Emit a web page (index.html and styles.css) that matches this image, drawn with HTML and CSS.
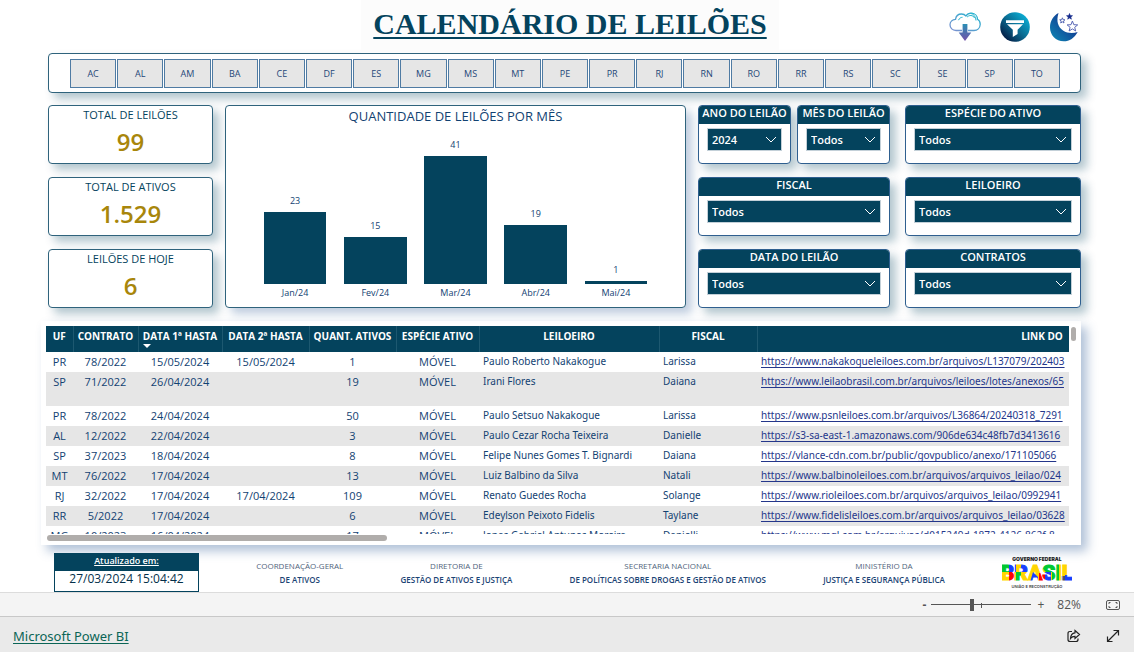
FILE: index.html
```html
<!DOCTYPE html>
<html lang="pt-BR">
<head>
<meta charset="utf-8">
<meta name="viewport" content="width=device-width, initial-scale=1">
<title>Calendário de Leilões</title>
<link rel="stylesheet" href="styles.css">
</head>
<body>
<main class="report">
  <header class="report-header">
    <h1 class="report-title">CALENDÁRIO DE LEILÕES</h1>
    <div class="actions">
      <button class="icon-button" aria-label="Baixar">
        <svg width="32" height="30" viewBox="0 0 32 30">
          <defs>
            <linearGradient id="cloud" x1="0" y1="1" x2="1" y2="0"><stop offset="0" stop-color="#7c8fd0"/><stop offset="1" stop-color="#1fb6cf"/></linearGradient>
            <linearGradient id="arrow" x1="0" y1="0" x2="0" y2="1"><stop offset="0" stop-color="#2b8fb5"/><stop offset="1" stop-color="#7450a8"/></linearGradient>
          </defs>
          <path d="M13 18.500H7C3.500 18.500 1 16 1 12.800C1 9.600 3.500 7.500 6.500 7.300C7 4 9.500 2 12.500 2C14.500 2 16 2.800 17 4C18.200 2 20.500 1 22.800 1.200C26 1.500 28.500 4 28.500 7.300C30.300 8.300 31.300 10.200 31.200 12.500C31 16 28.500 18.500 25 18.500H19" fill="none" stroke="url(#cloud)" stroke-width="1.300"/>
          <path d="M18 5.200C20 2.800 24 2.800 25.600 6M21.500 1.300C24.500 2 27 4.500 27 8.500M9.500 8.200C10.200 6.300 11.800 5.300 13.500 5.300" fill="none" stroke="#27b5cf" stroke-width="1"/>
          <path d="M13.600 12H18.400V20.500H22.300L16 29L9.700 20.500H13.600Z" fill="url(#arrow)"/>
        </svg>
      </button>
      <button class="icon-button" aria-label="Filtros">
        <svg width="30" height="30" viewBox="0 0 30 30">
          <defs><linearGradient id="disc" x1="0" y1="1" x2="1" y2="0"><stop offset="0.100" stop-color="#04173f"/><stop offset="0.500" stop-color="#0a6c92"/><stop offset="1" stop-color="#0cc3ea"/></linearGradient></defs>
          <circle cx="15" cy="15" r="14.800" fill="url(#disc)"/>
          <path d="M6 8.200H24V11H6ZM7 12.200H23L17.600 17.800V22L12.800 25V17.800Z" fill="#fff"/>
        </svg>
      </button>
      <button class="icon-button" aria-label="Modo noturno">
        <svg width="30" height="30" viewBox="0 0 30 30">
          <defs><linearGradient id="moon" x1="0" y1="1" x2="1" y2="0"><stop offset="0" stop-color="#0d8bb5"/><stop offset="1" stop-color="#141a84"/></linearGradient></defs>
          <path d="M9.500 1C7 9 9 15 14 18.500C18.500 21.500 24 21.500 28.700 20C25.500 26 20.500 29.300 14.800 29.300C6.800 29.300 1 23 1 15.500C1 9 4.500 3.500 9.500 1Z" fill="url(#moon)"/>
          <path d="M20.500 1.500L21.300 3.600L23.500 3.700L21.800 5L22.400 7.200L20.500 6L18.700 7.200L19.300 5L17.500 3.700L19.700 3.600Z" fill="#142a8c" stroke="#142a8c" stroke-width="0.600"/>
          <path d="M13.400 5.800L14.100 7.700L16 7.800L14.500 9L15 11L13.400 9.900L11.700 11L12.200 9L10.700 7.800L12.700 7.700Z" fill="#fff" stroke="#4a5cae" stroke-width="0.900"/>
          <path d="M23.400 9L24.800 12.700L28.700 12.900L25.700 15.300L26.700 19L23.400 16.900L20.100 19L21.100 15.300L18.100 12.900L22 12.700Z" fill="#fff" stroke="#5a68b6" stroke-width="1"/>
        </svg>
      </button>
    </div>
  </header>

  <nav class="panel states" aria-label="UF">
    <button>AC</button><button>AL</button><button>AM</button><button>BA</button><button>CE</button><button>DF</button><button>ES</button><button>MG</button><button>MS</button><button>MT</button><button>PE</button><button>PR</button><button>RJ</button><button>RN</button><button>RO</button><button>RR</button><button>RS</button><button>SC</button><button>SE</button><button>SP</button><button>TO</button>
  </nav>

  <section class="overview">
    <div class="stack">
      <article class="panel kpi"><h2>TOTAL DE LEILÕES</h2><p>99</p></article>
      <article class="panel kpi"><h2>TOTAL DE ATIVOS</h2><p>1.529</p></article>
      <article class="panel kpi"><h2>LEILÕES DE HOJE</h2><p>6</p></article>
    </div>

    <article class="panel chart">
      <h2>QUANTIDADE DE LEILÕES POR MÊS</h2>
      <div class="plot">
        <div class="column"><span class="value">23</span><div class="bar" style="--count:23"></div><span class="month">Jan/24</span></div>
        <div class="column"><span class="value">15</span><div class="bar" style="--count:15"></div><span class="month">Fev/24</span></div>
        <div class="column"><span class="value">41</span><div class="bar" style="--count:41"></div><span class="month">Mar/24</span></div>
        <div class="column"><span class="value">19</span><div class="bar" style="--count:19"></div><span class="month">Abr/24</span></div>
        <div class="column"><span class="value">1</span><div class="bar" style="--count:1"></div><span class="month">Mai/24</span></div>
      </div>
    </article>

    <div class="stack">
      <div class="pair">
        <div class="panel filter"><label for="ano">ANO DO LEILÃO</label><div class="picker"><select id="ano"><option>2024</option></select><svg width="12" height="8" viewBox="0 0 12 8"><path d="M1 1L6 6L11 1"/></svg></div></div>
        <div class="panel filter"><label for="mes">MÊS DO LEILÃO</label><div class="picker"><select id="mes"><option>Todos</option></select><svg width="12" height="8" viewBox="0 0 12 8"><path d="M1 1L6 6L11 1"/></svg></div></div>
      </div>
      <div class="panel filter"><label for="fiscal">FISCAL</label><div class="picker"><select id="fiscal"><option>Todos</option></select><svg width="12" height="8" viewBox="0 0 12 8"><path d="M1 1L6 6L11 1"/></svg></div></div>
      <div class="panel filter"><label for="data">DATA DO LEILÃO</label><div class="picker"><select id="data"><option>Todos</option></select><svg width="12" height="8" viewBox="0 0 12 8"><path d="M1 1L6 6L11 1"/></svg></div></div>
    </div>

    <div class="stack stack-last">
      <div class="panel filter"><label for="especie">ESPÉCIE DO ATIVO</label><div class="picker"><select id="especie"><option>Todos</option></select><svg width="12" height="8" viewBox="0 0 12 8"><path d="M1 1L6 6L11 1"/></svg></div></div>
      <div class="panel filter"><label for="leiloeiro">LEILOEIRO</label><div class="picker"><select id="leiloeiro"><option>Todos</option></select><svg width="12" height="8" viewBox="0 0 12 8"><path d="M1 1L6 6L11 1"/></svg></div></div>
      <div class="panel filter"><label for="contratos">CONTRATOS</label><div class="picker"><select id="contratos"><option>Todos</option></select><svg width="12" height="8" viewBox="0 0 12 8"><path d="M1 1L6 6L11 1"/></svg></div></div>
    </div>
  </section>

  <section class="table-card">
    <div class="table-row">
      <div class="table-view">
        <table>
          <colgroup><col class="w-uf"><col class="w-contract"><col class="w-first"><col class="w-second"><col class="w-second"><col class="w-kind"><col class="w-auctioneer"><col class="w-inspector"><col class="w-link"></colgroup>
          <thead>
            <tr><th>UF</th><th>CONTRATO</th><th class="sorted">DATA 1ª HASTA</th><th>DATA 2ª HASTA</th><th>QUANT. ATIVOS</th><th>ESPÉCIE ATIVO</th><th>LEILOEIRO</th><th>FISCAL</th><th>LINK DO</th></tr>
          </thead>
          <tbody>
            <tr><td>PR</td><td>78/2022</td><td>15/05/2024</td><td>15/05/2024</td><td>1</td><td>MÓVEL</td><td>Paulo Roberto Nakakogue</td><td>Larissa</td><td><a href="#">https://www.nakakogueleiloes.com.br/arquivos/L137079/202403</a></td></tr>
            <tr class="tall"><td>SP</td><td>71/2022</td><td>26/04/2024</td><td></td><td>19</td><td>MÓVEL</td><td>Irani Flores</td><td>Daiana</td><td><a href="#">https://www.leilaobrasil.com.br/arquivos/leiloes/lotes/anexos/65</a></td></tr>
            <tr><td>PR</td><td>78/2022</td><td>24/04/2024</td><td></td><td>50</td><td>MÓVEL</td><td>Paulo Setsuo Nakakogue</td><td>Larissa</td><td><a href="#">https://www.psnleiloes.com.br/arquivos/L36864/20240318_7291</a></td></tr>
            <tr><td>AL</td><td>12/2022</td><td>22/04/2024</td><td></td><td>3</td><td>MÓVEL</td><td>Paulo Cezar Rocha Teixeira</td><td>Danielle</td><td><a href="#">https://s3-sa-east-1.amazonaws.com/906de634c48fb7d3413616</a></td></tr>
            <tr><td>SP</td><td>37/2023</td><td>18/04/2024</td><td></td><td>8</td><td>MÓVEL</td><td>Felipe Nunes Gomes T. Bignardi</td><td>Daiana</td><td><a href="#">https://vlance-cdn.com.br/public/govpublico/anexo/171105066</a></td></tr>
            <tr><td>MT</td><td>76/2022</td><td>17/04/2024</td><td></td><td>13</td><td>MÓVEL</td><td>Luiz Balbino da Silva</td><td>Natali</td><td><a href="#">https://www.balbinoleiloes.com.br/arquivos/arquivos_leilao/024</a></td></tr>
            <tr><td>RJ</td><td>32/2022</td><td>17/04/2024</td><td>17/04/2024</td><td>109</td><td>MÓVEL</td><td>Renato Guedes Rocha</td><td>Solange</td><td><a href="#">https://www.rioleiloes.com.br/arquivos/arquivos_leilao/0992941</a></td></tr>
            <tr><td>RR</td><td>5/2022</td><td>17/04/2024</td><td></td><td>6</td><td>MÓVEL</td><td>Edeylson Peixoto Fidelis</td><td>Taylane</td><td><a href="#">https://www.fidelisleiloes.com.br/arquivos/arquivos_leilao/03628</a></td></tr>
            <tr><td>MG</td><td>10/2023</td><td>16/04/2024</td><td></td><td>17</td><td>MÓVEL</td><td>Jonas Gabriel Antunes Moreira</td><td>Danielli</td><td><a href="#">https://www.mgl.com.br/arquivos/d015249d-1872-4126-862f-8</a></td></tr>
          </tbody>
        </table>
      </div>
      <div class="scroll-y"></div>
    </div>
    <div class="scroll-x"></div>
  </section>

  <footer class="credits">
    <div class="updated"><h2>Atualizado em:</h2><p>27/03/2024 15:04:42</p></div>
    <p class="credit">COORDENAÇÃO-GERAL<strong>DE ATIVOS</strong></p>
    <p class="credit">DIRETORIA DE<strong>GESTÃO DE ATIVOS E JUSTIÇA</strong></p>
    <p class="credit">SECRETARIA NACIONAL<strong>DE POLÍTICAS SOBRE DROGAS E GESTÃO DE ATIVOS</strong></p>
    <p class="credit">MINISTÉRIO DA<strong>JUSTIÇA E SEGURANÇA PÚBLICA</strong></p>
    <svg class="brand" width="70" height="34" viewBox="0 0 70 34">
      <defs>
        <pattern id="mosaic" width="70" height="34" patternUnits="userSpaceOnUse">
          <rect width="70" height="34" fill="#ffd500"/>
          <path d="M0 0H7V17H0ZM37 0H50V17H44L41 14H37ZM50 0H57V34H50Z" fill="#00c832"/>
          <path d="M7 0H14V17H7ZM21 0H26V17H18ZM31 17L36 22V34H26ZM43 17H49V34H43ZM63 20H70V34H63Z" fill="#183eff"/>
          <path d="M7 17H13V34H7ZM37 18H43V34H37Z" fill="#ff0000"/>
          <path d="M14 17H19V34H14Z" fill="#00c832"/>
          <path d="M59 21H63V34H59Z" fill="#49506a"/>
        </pattern>
      </defs>
      <text class="brand-top" x="35" y="6">GOVERNO FEDERAL</text>
      <text class="brand-name" x="35" y="25">BRASIL</text>
      <text class="brand-bottom" x="35" y="33">UNIÃO E RECONSTRUÇÃO</text>
    </svg>
  </footer>
</main>

<div class="zoom-bar">
  <button class="minus" aria-label="Reduzir">-</button>
  <div class="slider"><input type="range" min="0" max="100" value="40" aria-label="Zoom"></div>
  <button aria-label="Ampliar">+</button>
  <span class="percent">82%</span>
  <button aria-label="Ajustar à página">
    <svg width="14" height="12" viewBox="0 0 14 12"><rect x="0.500" y="1.500" width="13" height="9" rx="1.500"/><path d="M3 5V3.500H4.500M9.500 3.500H11V5M11 7V8.500H9.500M4.500 8.500H3V7"/></svg>
  </button>
</div>
<div class="embed-bar">
  <a href="#">Microsoft Power BI</a>
  <button aria-label="Compartilhar">
    <svg width="14" height="14" viewBox="0 0 14 14"><path d="M5 2.500H3Q1 2.500 1 4.500V10.500Q1 12.500 3 12.500H9Q11 12.500 11 10.500V9.500M8 1.500L12.500 5.500L8 9.500V7.300Q5 7.300 3.500 9.500Q3.800 4.200 8 3.800Z"/></svg>
  </button>
  <button aria-label="Tela cheia">
    <svg width="14" height="14" viewBox="0 0 14 14"><path d="M1.500 12.500L12.500 1.500M7.500 1.500H12.500V6.500M1.500 7.500V12.500H6.500"/></svg>
  </button>
</div>
</body>
</html>
```
FILE: styles.css
```css
* { box-sizing: border-box; }
body {
  margin: 0;
  min-height: 100vh;
  display: flex;
  flex-direction: column;
  background: #fff;
  color: #124272;
  font-family: "Open Sans", "Noto Sans", sans-serif;
  font-size: 11px;
}
h1, h2, p { margin: 0; font-weight: 400; }
button { font: inherit; color: inherit; padding: 0; border: 0; background: none; }

.report { flex: 1; padding: 0 53px 0 48px; overflow: hidden; }
.report-header {
  display: grid;
  grid-template-columns: 1fr auto 1fr;
  padding-left: 11px;
  height: 53px;
}
.report-title {
  grid-column: 2;
  padding: 0 12px;
  background: #fcfcfc;
  color: #04435d;
  font: 700 30px/48px "Liberation Serif", serif;
  text-decoration: underline 2px;
  text-underline-offset: 3px;
}
.actions { display: flex; justify-content: flex-end; align-items: center; gap: 19px; padding-right: 2px; }
.icon-button { display: flex; }

.panel {
  background: #fff;
  border: 1px solid #2f637c;
  border-radius: 4px;
  box-shadow: 6px 6px 10px #04435d4d;
}
.states {
  display: grid;
  grid-template-columns: repeat(21, 1fr);
  gap: 1px;
  padding: 5px 20px 4px 21px;
  margin-bottom: 12px;
}
.states button {
  height: 29px;
  background: #e6e6e6;
  border: 1px solid #4f7ba3;
  color: #1f4678;
  font-size: 9px;
}

.overview {
  display: grid;
  grid-template-columns: 165fr 461fr 192fr 179fr;
  gap: 12px;
}
.stack { display: grid; grid-auto-rows: 59px; gap: 13px; }
.stack-last { padding-left: 3px; }
.pair { display: grid; grid-template-columns: 1fr 1fr; gap: 6px; }

.kpi { text-align: center; }
.kpi h2 { font-size: 11px; line-height: 18px; color: #04435d; }
.kpi p { font-size: 24px; line-height: 36px; font-weight: 600; color: #a8860b; }

.chart { display: flex; flex-direction: column; text-align: center; box-shadow: 6px 6px 10px #2c5a944d; }
.chart h2 { font-size: 13px; line-height: 21px; }
.plot {
  flex: 1;
  display: grid;
  grid-template-columns: repeat(5, 1fr);
  padding: 0 29px 5px;
}
.column { display: flex; flex-direction: column; justify-content: flex-end; align-items: center; }
.value { font-size: 9px; line-height: 14px; margin-bottom: 4px; }
.month { font-size: 9px; line-height: 18px; }
.bar { width: 78%; height: calc(var(--count) * 128px / 41); background: #04435d; }

.filter { overflow: hidden; border-color: #2f5f8f; }
.filter label {
  display: block;
  height: 18px;
  line-height: 14px;
  background: #04435d;
  color: #fff;
  font-weight: 600;
  text-align: center;
  white-space: nowrap;
}
.picker { display: grid; align-items: center; padding: 4px 8px; }
.picker select {
  grid-area: 1 / 1;
  width: 100%;
  height: 23px;
  padding: 0 4px;
  appearance: none;
  border: 1px solid #c3d0d8;
  border-radius: 0;
  background: #04435d;
  color: #fff;
  font: 600 11px "Open Sans", sans-serif;
}
.picker svg {
  grid-area: 1 / 1;
  justify-self: end;
  margin-right: 5px;
  pointer-events: none;
  fill: none;
  stroke: #fff;
}

.table-card {
  margin: 13px 0 0 -7px;
  padding: 5px 5px 3px;
  background: #fff;
  box-shadow: 6px 6px 10px #2c5a9460;
}
.table-row { display: flex; gap: 2px; }
.table-view { flex: 1; min-width: 0; height: 208px; overflow: hidden; }
.scroll-y { width: 5px; height: 14px; margin-top: 1px; border-radius: 3px; background: #b0adab; }
.scroll-x { width: 33%; height: 6px; margin: 1px; border-radius: 3px; background: #b0adab; }
table { width: 1281px; table-layout: fixed; border-collapse: collapse; }
.w-uf { width: 27px; }
.w-contract { width: 65px; }
.w-first { width: 84px; }
.w-second { width: 87px; }
.w-kind { width: 83px; }
.w-auctioneer { width: 180px; }
.w-inspector { width: 98px; }
.w-link { width: 570px; }
th {
  height: 26px;
  padding: 2px 0 0;
  background: #04435d;
  border-right: 1px solid #1d5870;
  color: #fff;
  font-size: 10px;
  font-weight: 700;
  line-height: 16px;
  vertical-align: top;
  white-space: nowrap;
}
.sorted { position: relative; }
.sorted::after {
  content: "";
  position: absolute;
  left: 4px;
  bottom: 4px;
  border: 4px solid transparent;
  border-top-color: #fff;
  border-bottom: 0;
}
td { height: 20px; padding: 0 4px; line-height: 19px; text-align: center; vertical-align: top; white-space: nowrap; }
td:nth-child(n+7) { text-align: left; font-family: "Noto Sans", sans-serif; font-size: 10px; }
.tall td { height: 34px; }
tbody tr:nth-child(even) { background: #e6e6e6; }
td a { color: #24368a; text-underline-offset: 2px; }

.credits {
  display: flex;
  justify-content: space-between;
  align-items: flex-start;
  padding: 8px 9px 0 6px;
}
.updated { width: 145px; height: 39px; background: #fff; border: 1px solid #04435d; text-align: center; position: relative; }
.updated h2 {
  background: #04435d;
  color: #fff;
  font-size: 9px;
  font-weight: 600;
  line-height: 14px;
  height: 17px;
  text-decoration: underline;
}
.updated p { font-size: 12px; line-height: 15px; color: #04304a; }
.credit { padding-top: 6px; font-size: 8px; line-height: 14px; color: #51647c; text-align: center; }
.credit strong { display: block; color: #1b4474; font-weight: 600; }
.brand { margin-top: 2px; }
.brand text { text-anchor: middle; }
.brand-top { font: 900 5px Inter, sans-serif; fill: #222; }
.brand-name { font: 900 21px Roboto, sans-serif; fill: url(#mosaic); stroke: url(#mosaic); stroke-width: 1px; }
.brand-bottom { font: 600 4px Inter, sans-serif; fill: #444; }

.zoom-bar, .embed-bar { display: flex; align-items: center; padding: 0 14px 0 13px; }
.zoom-bar {
  justify-content: flex-end;
  height: 24px;
  background: #f4f4f4;
  border-top: 1px solid #dcdcdc;
  color: #555;
  font-size: 12px;
}
.zoom-bar button { display: flex; }
.zoom-bar .minus { font-weight: 700; }
.zoom-bar svg { fill: none; stroke: #555; }
.slider { display: flex; position: relative; margin: 0 6px 0 5px; }
.slider::after { content: ""; position: absolute; left: 50%; top: 4px; width: 1px; height: 5px; background: #555; }
.slider input { appearance: none; width: 100px; height: 12px; margin: 0; background: linear-gradient(#555, #555) center / 100% 1px no-repeat; }
.slider input::-webkit-slider-thumb { appearance: none; width: 4px; height: 12px; background: #555; }
.percent { margin: 0 25px 0 13px; }
.embed-bar { gap: 25px; height: 36px; background: #eaeaea; border-top: 1px solid #c8c8c8; padding-top: 2px; }
.embed-bar a { margin-right: auto; color: #0b6556; font-family: "Noto Sans", sans-serif; font-size: 13px; text-underline-offset: 2px; }
.embed-bar button { display: flex; }
.embed-bar svg { fill: none; stroke: #222; stroke-width: 1.2px; }
```
